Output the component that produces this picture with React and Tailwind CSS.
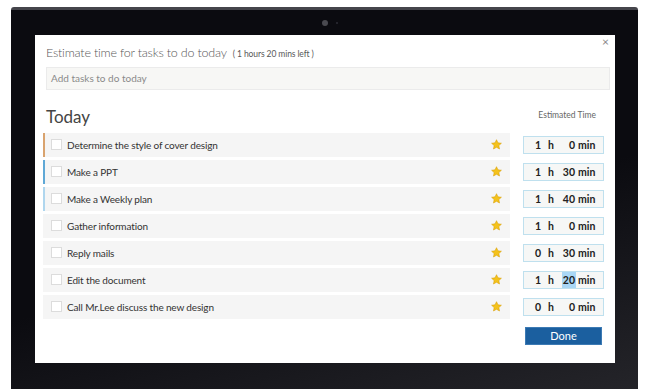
import { useState } from "react"

const tasks = [
  { title: "Determine the style of cover design", h: 1, m: 0, edge: "border-l-[#d9a36e]" },
  { title: "Make a PPT", h: 1, m: 30, edge: "border-l-[#5fa8d6]" },
  { title: "Make a Weekly plan", h: 1, m: 40, edge: "border-l-[#afd6ee]" },
  { title: "Gather information", h: 1, m: 0, edge: "border-l-transparent" },
  { title: "Reply mails", h: 0, m: 30, edge: "border-l-transparent" },
  { title: "Edit the document", h: 1, m: 20, edge: "border-l-transparent", selected: true },
  { title: "Call Mr.Lee discuss the new design", h: 0, m: 0, edge: "border-l-transparent" },
]

function Star() {
  return (
    <svg width="11" height="11" viewBox="0 0 24 24">
      <path
        d="M12 1.5l3.2 6.9 7.5.9-5.6 5.1 1.5 7.4L12 18.1l-6.6 3.7 1.5-7.4L1.3 9.3l7.5-.9z"
        fill="#f4c21c"
        stroke="#d89e00"
        strokeWidth="1.2"
      />
    </svg>
  )
}

function TimeBox({ h, m, selected }) {
  return (
    <div className="w-[81px] h-[18px] border border-[#bfe0ee] bg-[#f6f7f6] flex items-center text-[10.5px] font-bold text-[#222] leading-none">
      <span className="w-[17px] text-right">{h}</span>
      <span className="ml-[7px] w-[6px]">h</span>
      <span className="w-[22px] flex justify-end">
        <span className={`px-[1px] py-[3px] ${selected ? "bg-[#a9d7f6]" : ""}`}>{m}</span>
      </span>
      <span className="ml-[2px]">min</span>
    </div>
  )
}

function TaskRow({ task }) {
  const [done, setDone] = useState(false)
  return (
    <div className="flex items-center gap-[13px]">
      <div className={`w-[467px] h-[24px] bg-[#f5f5f5] border-l-[2px] ${task.edge} flex items-center pl-[6px] pr-[8px]`}>
        <button
          onClick={() => setDone(!done)}
          className="w-[11px] h-[11px] bg-white border border-[#dcdcdc] shrink-0"
        />
        <span className="ml-[5px] pt-[1px] text-[10px] tracking-[-0.15px] text-[#333] leading-none">{task.title}</span>
        <span className="ml-auto flex"><Star /></span>
      </div>
      <TimeBox h={task.h} m={task.m} selected={task.selected} />
    </div>
  )
}

export default function App() {
  return (
    <div className="w-[658px] h-[389px] bg-white overflow-hidden" style={{ fontFamily: 'Lato, "Noto Sans", sans-serif' }}>
      <div className="ml-[11px] mt-[7px] w-[627px] h-[400px] rounded-t-[3px] border-t-[3px] border-[#45454b] bg-[linear-gradient(165deg,#0b0b10_55%,#26262b)] relative pt-[25px] pl-[24px]">
        {/* camera */}
        <div className="absolute top-[10px] left-[311px] w-[6px] h-[6px] rounded-full bg-[#4a4a50]" />
        <div className="absolute top-[12px] left-[325px] w-[2px] h-[2px] rounded-full bg-[#2c2c34]" />

        <div className="w-[580px] h-[328px] bg-white relative pt-[9px]">
          <button className="absolute top-[1px] right-[6px] text-[12px] text-[#888] leading-none">×</button>

          <div className="pl-[11px] flex items-baseline gap-[6px] text-[#585858]">
            <h2 className="text-[12.5px] tracking-[-0.2px] font-light">Estimate time for tasks to do today</h2>
            <span className="text-[8.5px] tracking-[-0.1px]">( 1 hours 20 mins left )</span>
          </div>

          <div className="ml-[11px] mt-[4px] w-[564px] h-[23px] bg-[#f7f7f5] border border-[#ebebeb] flex items-center px-[4px]">
            <span className="text-[10px] text-[#8a8a8a]">Add tasks to do today</span>
          </div>

          <div className="mt-[18px] pl-[11px] flex items-end justify-between pr-[19px]">
            <h3 className="text-[17px] text-[#444] leading-none">Today</h3>
            <span className="text-[8.5px] text-[#666] mb-[3px]">Estimated Time</span>
          </div>

          <div className="mt-[8px] ml-[8px] flex flex-col gap-[3px]">
            {tasks.map((t) => (
              <TaskRow key={t.title} task={t} />
            ))}
          </div>

          <div className="flex justify-end pr-[13px] mt-[8px]">
            <button className="w-[77px] h-[18px] bg-[#1b5f9f] border border-[#3c7ab4] text-white text-[11px] leading-none">
              Done
            </button>
          </div>
        </div>
      </div>
    </div>
  )
}
